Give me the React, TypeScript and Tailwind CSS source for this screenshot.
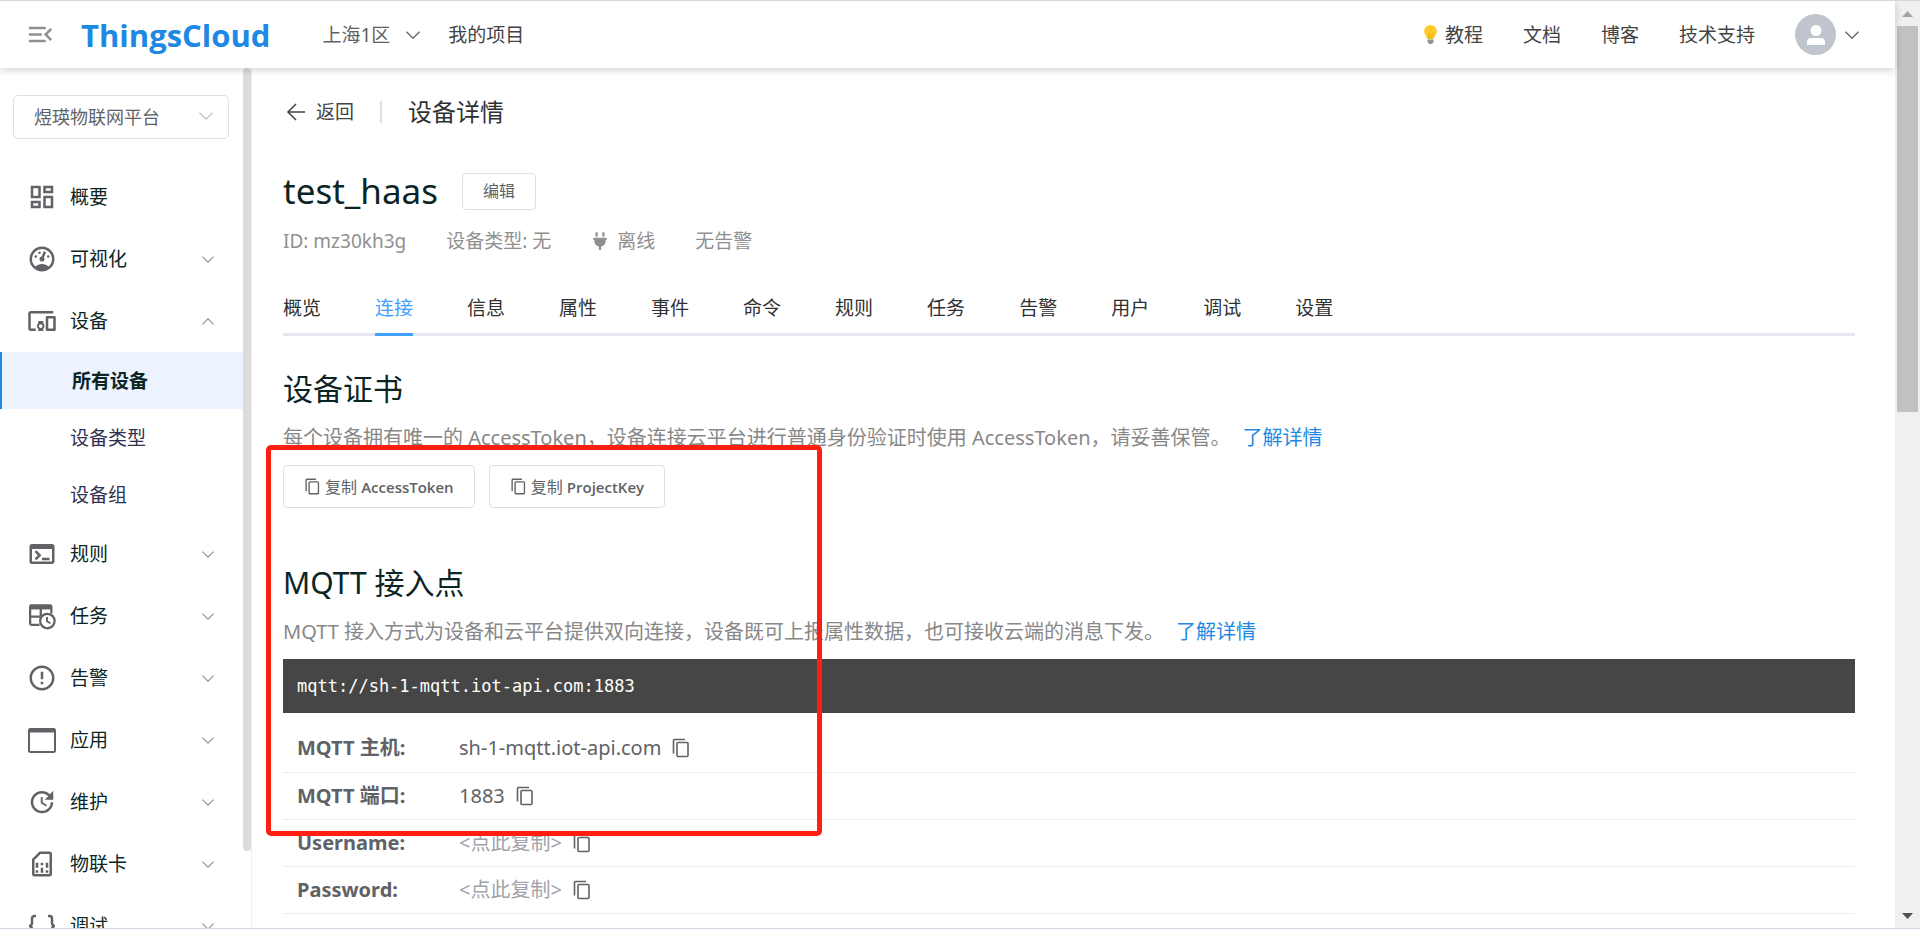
import { useState } from 'react'
import type { ReactNode } from 'react'
import { FaPlug } from 'react-icons/fa'
import {
  MdErrorOutline,
  MdMenuOpen,
  MdOutlineDashboard,
  MdOutlineDevicesOther,
  MdOutlineSimCard,
  MdOutlineTerminal,
  MdUpdate,
} from 'react-icons/md'

interface MenuItem {
  label: string
  icon: ReactNode
  expandable?: boolean
  children?: string[]
}

const menu: MenuItem[] = [
  { label: '概要', icon: <MdOutlineDashboard size={30} /> },
  { label: '可视化', icon: <GaugeIcon />, expandable: true },
  { label: '设备', icon: <MdOutlineDevicesOther size={30} />, expandable: true, children: ['所有设备', '设备类型', '设备组'] },
  { label: '规则', icon: <MdOutlineTerminal size={30} />, expandable: true },
  { label: '任务', icon: <TableClockIcon />, expandable: true },
  { label: '告警', icon: <MdErrorOutline size={30} />, expandable: true },
  { label: '应用', icon: <WindowIcon />, expandable: true },
  { label: '维护', icon: <MdUpdate size={30} />, expandable: true },
  { label: '物联卡', icon: <MdOutlineSimCard size={30} />, expandable: true },
  { label: '调试', icon: <BracesIcon />, expandable: true },
]

const tabs = ['概览', '连接', '信息', '属性', '事件', '命令', '规则', '任务', '告警', '用户', '调试', '设置']

const connection = [
  { label: 'MQTT 主机:', value: 'sh-1-mqtt.iot-api.com' },
  { label: 'MQTT 端口:', value: '1883' },
  { label: 'Username:', value: '<点此复制>', masked: true },
  { label: 'Password:', value: '<点此复制>', masked: true },
]

export default function App() {
  return (
    <div className="flex h-screen flex-col overflow-hidden border-t border-[#d6d6d6] bg-white font-['Noto_Sans','Noto_Sans_CJK_SC',sans-serif] text-[19px] leading-7 text-[#303133]">
      <div className="flex min-h-0 flex-1">
        <div className="flex min-w-0 flex-1 flex-col">
          <Header />
          <div className="flex min-h-0 flex-1">
            <Sidebar />
            <DevicePage />
          </div>
        </div>
        <PageScrollbar />
      </div>
      <div className="h-px shrink-0 bg-[#cdd8e2]" />
    </div>
  )
}

function Header() {
  return (
    <header className="z-10 flex h-[67px] shrink-0 items-center bg-white pr-9 pl-[25px] shadow-[0_2px_8px_rgba(0,0,0,0.18)]">
      <button aria-label="收起菜单" className="text-[#909090]">
        <MdMenuOpen size={31} />
      </button>
      <a href="#" className="ml-[25px] font-['Open_Sans',sans-serif] text-[31px] leading-10 font-bold text-[#1e88e5]">ThingsCloud</a>

      <nav className="ml-[52px] flex items-center gap-7 text-[#444]">
        <button className="flex items-center gap-4 text-[#606266]">
          上海1区
          <Chevron className="h-2 w-[14px]" />
        </button>
        <a href="#">我的项目</a>
      </nav>

      <nav className="ml-auto flex items-center gap-10 text-[#444]">
        <a href="#" className="flex items-center gap-2">
          <BulbIcon />
          教程
        </a>
        <a href="#">文档</a>
        <a href="#">博客</a>
        <a href="#">技术支持</a>
        <button aria-label="账户" className="flex items-center gap-[9px] text-[#606266]">
          <span className="flex h-[41px] w-[41px] items-center justify-center rounded-full bg-[#c0c4cc]">
            <svg viewBox="0 0 20 20" className="h-5 w-5" fill="#fff">
              <circle cx="10" cy="5.5" r="5.5" />
              <path d="M1 20v-3a4 4 0 0 1 4-4h10a4 4 0 0 1 4 4v3z" />
            </svg>
          </span>
          <Chevron className="h-2 w-[14px]" />
        </button>
      </nav>
    </header>
  )
}

function Sidebar() {
  return (
    <aside className="flex w-[252px] shrink-0 overflow-hidden border-r border-[#ebeef5]">
      <div className="flex-1">
        <div className="relative mt-[27px] mr-[14px] mb-[27px] ml-[13px]">
          <select
            aria-label="项目"
            className="h-11 w-full appearance-none rounded-[5px] border border-[#dcdfe6] bg-white px-5 text-[18px] text-[#606266]"
          >
            <option>煜瑛物联网平台</option>
          </select>
          <Chevron className="pointer-events-none absolute top-[17px] right-4 h-2 w-[14px] text-[#c0c4cc]" />
        </div>

        <nav>
          {menu.map((item) => (
            <div key={item.label}>
              <button className="flex h-[62px] w-full items-center pr-[29px] pl-[27px] text-[#0b2525]">
                <span className="text-[#606266]">{item.icon}</span>
                <span className="ml-[13px]">{item.label}</span>
                {item.expandable && (
                  <Chevron className={item.children ? 'ml-auto h-[7px] w-3 rotate-180 text-[#909399]' : 'ml-auto h-[7px] w-3 text-[#909399]'} />
                )}
              </button>
              {item.children?.map((child, i) => (
                <a
                  key={child}
                  href="#"
                  className={
                    i === 0
                      ? 'flex h-[57px] items-center border-l-2 border-[#1e88e5] bg-[#ecf2fe] pl-[70px] font-bold text-[#0b2525]'
                      : 'flex h-[57px] items-center pl-[70px] text-[#303150]'
                  }
                >
                  {child}
                </a>
              ))}
            </div>
          ))}
        </nav>
      </div>
      <div className="w-2">
        <div className="h-[91%] rounded-full bg-[#dcdcdc]" />
      </div>
    </aside>
  )
}

function DevicePage() {
  const [activeTab, setActiveTab] = useState('连接')

  return (
    <main className="relative min-w-0 flex-1 overflow-hidden pt-[30px] pr-10 pl-[31px]">
      <div className="flex items-center">
        <button className="flex items-center gap-[9px] text-[#444]">
          <svg viewBox="0 0 24 24" className="h-6 w-6" fill="none" stroke="currentColor" strokeWidth="1.6">
            <path d="M22 12H5M13 4l-8 8 8 8" />
          </svg>
          返回
        </button>
        <span className="mx-[26px] h-[22px] w-[2px] bg-[#dcdfe6]" />
        <span className="text-[24px]">设备详情</span>
      </div>

      <div className="mt-10 flex items-center gap-6">
        <h1 className="text-[35px] leading-[50px] text-[#0b2525]">test_haas</h1>
        <button className="h-[37px] rounded-[4px] border border-[#dcdfe6] px-5 text-[16px] text-[#606266]">编辑</button>
      </div>

      <div className="mt-[11px] flex items-center gap-10 text-[#909090]">
        <span>ID: mz30kh3g</span>
        <span>设备类型: 无</span>
        <span className="flex items-center gap-2">
          <FaPlug size={18} />
          离线
        </span>
        <span>无告警</span>
      </div>

      <div role="tablist" className="mt-[31px] flex gap-[54px] border-b-[3px] border-[#e4e7ed]">
        {tabs.map((tab) => (
          <button
            key={tab}
            role="tab"
            aria-selected={tab === activeTab}
            onClick={() => setActiveTab(tab)}
            className={
              tab === activeTab
                ? '-mb-[3px] border-b-[3px] border-[#409eff] pt-2 pb-[11px] text-[#409eff]'
                : '-mb-[3px] border-b-[3px] border-transparent pt-2 pb-[11px]'
            }
          >
            {tab}
          </button>
        ))}
      </div>

      <section className="mt-[33px]">
        <h2 className="text-[30px] leading-10 text-[#0b2525]">设备证书</h2>
        <p className="mt-[15px] text-[20px] text-[#888]">
          每个设备拥有唯一的 AccessToken，设备连接云平台进行普通身份验证时使用 AccessToken，请妥善保管。
          <a href="#" className="ml-3 text-[#1e88e5]">了解详情</a>
        </p>
        <div className="mt-[13px] flex gap-[14px]">
          <CopyButton name="AccessToken" />
          <CopyButton name="ProjectKey" />
        </div>
      </section>

      <section className="mt-[55px]">
        <h2 className="text-[30px] leading-10 text-[#0b2525]">MQTT 接入点</h2>
        <p className="mt-[15px] text-[20px] text-[#888]">
          MQTT 接入方式为设备和云平台提供双向连接，设备既可上报属性数据，也可接收云端的消息下发。
          <a href="#" className="ml-3 text-[#1e88e5]">了解详情</a>
        </p>
        <pre className="mt-[13px] bg-[#464646] px-[14px] py-[13px] font-['DejaVu_Sans_Mono',monospace] text-[17px] text-white">
          mqtt://sh-1-mqtt.iot-api.com:1883
        </pre>
        <table className="mt-3 w-full text-left text-[20px] text-[#606266]">
          <tbody>
            {connection.map((row) => (
              <tr key={row.label} className="h-[47px] border-b border-[#ebeef5]">
                <th scope="row" className="w-44 pl-[14px] font-bold">{row.label}</th>
                <td>
                  <span className="flex items-center gap-[10px]">
                    <span className={row.masked ? 'text-[#a0a3aa]' : ''}>{row.value}</span>
                    <button aria-label={`复制 ${row.label}`}>
                      <CopyIcon className="h-5 w-5" />
                    </button>
                  </span>
                </td>
              </tr>
            ))}
          </tbody>
        </table>
      </section>

      {/* highlight frame over the credentials */}
      <div className="pointer-events-none absolute top-[377px] left-[14px] h-[391px] w-[556px] rounded-[5px] border-5 border-[#ff1f11]" />
    </main>
  )
}

function PageScrollbar() {
  return (
    <div className="flex w-[25px] shrink-0 flex-col items-center bg-[#f0f0f0]">
      <svg viewBox="0 0 25 25" className="h-[25px] w-[25px]" fill="#a3a3a3">
        <path d="M7 16l5.500-6 5.500 6z" />
      </svg>
      <div className="w-full flex-1 px-[2px]">
        <div className="h-[44%] bg-[#c1c1c1]" />
      </div>
      <svg viewBox="0 0 25 25" className="h-[25px] w-[25px]" fill="#505050">
        <path d="M7 10l5.500 6 5.500-6z" />
      </svg>
    </div>
  )
}

function CopyButton({ name }: { name: string }) {
  return (
    <button className="flex h-[43px] items-center gap-1 rounded-[4px] border border-[#dcdfe6] px-5 font-['Open_Sans','Noto_Sans_CJK_SC',sans-serif] text-[16px] text-[#606266]">
      <CopyIcon className="h-[17px] w-[17px]" />
      <span>
        复制 <span className="text-[15px] font-semibold">{name}</span>
      </span>
    </button>
  )
}

function Chevron({ className }: { className: string }) {
  return (
    <svg viewBox="0 0 14 8" className={className} fill="none" stroke="currentColor" strokeWidth="1.3">
      <path d="M.5.7L7 7.200 13.500.7" />
    </svg>
  )
}

function CopyIcon({ className }: { className: string }) {
  return (
    <svg viewBox="0 0 20 20" className={className} fill="none" stroke="currentColor" strokeWidth="1.600">
      <rect x="6" y="4.500" width="11" height="14" rx="1" />
      <path d="M2.500 15.500V2.500a1 1 0 0 1 1-1H14" />
    </svg>
  )
}

function BulbIcon() {
  return (
    <svg viewBox="0 0 13 19" className="h-[19px] w-[13px]">
      <path d="M6.500 0a6.300 6.300 0 0 1 6.300 6.300c0 3.200-2.500 4.700-3 7.700H3.200c-.5-3-3-4.500-3-7.700A6.300 6.300 0 0 1 6.500 0z" fill="#ffca28" />
      <path d="M4.500 8l1 6M8.500 8l-1 6" stroke="#e59600" strokeWidth=".7" fill="none" />
      <path d="M3.500 14.500h6V17l-1.500 2H5l-1.500-2z" fill="#8a969c" />
    </svg>
  )
}

function GaugeIcon() {
  return (
    <svg viewBox="0 0 24 24" className="h-[30px] w-[30px]" fill="currentColor">
      <path d="M12 2a10 10 0 1 0 0 20 10 10 0 0 0 0-20m0 2a8 8 0 0 1 8 8c0 2.400-1 4.500-2.700 6-1.400-1.300-3.300-2-5.300-2s-3.800.7-5.300 2C5 16.500 4 14.400 4 12a8 8 0 0 1 8-8m2 1.890c-.38.010-.74.260-.9.650l-1.290 3.230-.1.230c-.71.130-1.300.6-1.570 1.260-.41 1.030.09 2.190 1.120 2.600s2.190-.09 2.600-1.120c.26-.66.140-1.420-.29-1.980l.1-.26 1.290-3.210.010-.03c.2-.51-.05-1.090-.56-1.300-.13-.05-.26-.07-.41-.07M10 6a1 1 0 1 0 0 2 1 1 0 0 0 0-2M7 9a1 1 0 1 0 0 2 1 1 0 0 0 0-2m10 0a1 1 0 1 0 0 2 1 1 0 0 0 0-2z" />
    </svg>
  )
}

function TableClockIcon() {
  return (
    <svg viewBox="0 0 24 24" className="h-[30px] w-[30px]" fill="none" stroke="currentColor" strokeWidth="1.800">
      <path d="M19.500 10V4.500a1 1 0 0 0-1-1H3.500a1 1 0 0 0-1 1V18a1 1 0 0 0 1 1h6.500M2.500 12.500h8.500M11 6v6" />
      <path d="M2.500 5h17" strokeWidth="3.500" />
      <circle cx="16.300" cy="16" r="5.800" />
      <path d="M16 12.800V16.200l2.700 1.600" strokeWidth="1.500" />
    </svg>
  )
}

function WindowIcon() {
  return (
    <svg viewBox="0 0 30 30" className="h-[30px] w-[30px]" fill="none" stroke="currentColor" strokeWidth="2">
      <rect x="2" y="4" width="26" height="23" rx="1.500" />
      <path d="M2 5.500h26" strokeWidth="4" />
    </svg>
  )
}

function BracesIcon() {
  return (
    <svg viewBox="0 0 30 30" className="h-[30px] w-[30px]" fill="none" stroke="currentColor" strokeWidth="2.500">
      <path d="M9 5H7.500a2.500 2.500 0 0 0-2.500 2.500V12a3 3 0 0 1-3 3 3 3 0 0 1 3 3v4.500A2.500 2.500 0 0 0 7.500 25H9M21 5h1.500A2.500 2.500 0 0 1 25 7.500V12a3 3 0 0 0 3 3 3 3 0 0 0-3 3v4.500a2.500 2.500 0 0 1-2.500 2.500H21" />
    </svg>
  )
}
